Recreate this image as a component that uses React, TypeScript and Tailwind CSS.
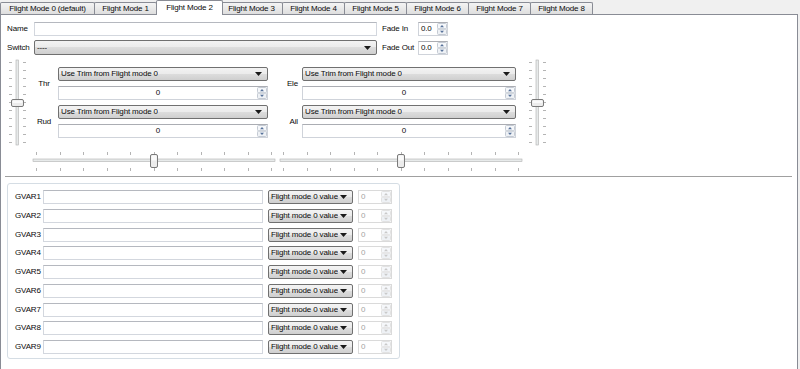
import React from "react";

const tabs = [
  "Flight Mode 0 (default)",
  "Flight Mode 1",
  "Flight Mode 2",
  "Flight Mode 3",
  "Flight Mode 4",
  "Flight Mode 5",
  "Flight Mode 6",
  "Flight Mode 7",
  "Flight Mode 8",
];

const comboBg =
  "bg-[linear-gradient(#f3f3f3,#ebebeb_50%,#dddddd_50%,#cfcfcf)]";

function Arrow() {
  return (
    <svg width="7" height="4" viewBox="0 0 7 4" className="shrink-0">
      <path d="M0 0h7L3.5 4z" fill="#1a1a1a" />
    </svg>
  );
}

function Combo({ text, className = "" }: { text: string; className?: string }) {
  return (
    <div
      className={`flex items-center justify-between h-[14px] rounded-[2px] border border-[#707070] ${comboBg} pl-[2px] pr-[5px] ${className}`}
    >
      <span className="truncate leading-none">{text}</span>
      <Arrow />
    </div>
  );
}

function SpinButtons({ disabled }: { disabled?: boolean }) {
  const stroke = disabled ? "#e2e2e2" : "#c4cad3";
  const arrow = disabled ? "#c9c9c9" : "#56719a";
  return (
    <svg width="10" height="12" viewBox="0 0 10 12" className="shrink-0">
      <rect x="0.5" y="0.5" width="9" height="5.3" rx="1" fill="#f5f7fa" stroke={stroke} />
      <rect x="0.5" y="6.2" width="9" height="5.3" rx="1" fill="#eef1f5" stroke={stroke} />
      <path d="M3 4.3h4L5 2.1z" fill={arrow} />
      <path d="M3 7.7h4L5 9.9z" fill={arrow} />
    </svg>
  );
}

function Spin({
  value,
  center,
  disabled,
  className = "",
}: {
  value: string;
  center?: boolean;
  disabled?: boolean;
  className?: string;
}) {
  return (
    <div
      className={`flex items-center h-[14px] bg-white border ${
        disabled
          ? "border-[#dadada] text-[#a3a3a3]"
          : "border-[#cfd3da] border-t-[#abadb3]"
      } ${className}`}
    >
      <div className={`flex-1 leading-none ${center ? "text-center" : "pl-[2px]"}`}>
        {value}
      </div>
      <SpinButtons disabled={disabled} />
    </div>
  );
}

function TextBox({ className = "" }: { className?: string }) {
  return (
    <div
      className={`h-[14px] bg-white border border-[#d3d7de] border-t-[#b5b8bf] ${className}`}
    />
  );
}

function VSlider() {
  const ticks = Array.from({ length: 11 }, (_, i) => 4 + i * 8);
  return (
    <svg width="24" height="90" viewBox="0 0 24 90" className="shrink-0">
      {ticks.map((y) => (
        <g key={y} stroke="#b4b4b4">
          <line x1="3" x2="6" y1={y + 0.5} y2={y + 0.5} />
          <line x1="17" x2="20" y1={y + 0.5} y2={y + 0.5} />
        </g>
      ))}
      <rect x="10" y="2" width="2.5" height="85" fill="#e7eaea" stroke="#b0b0b0" strokeWidth="0.6" />
      <rect x="5.5" y="41.5" width="12" height="7" rx="1.5" fill="#ececec" stroke="#7a7a7a" />
      <rect x="6.5" y="42.5" width="10" height="2.5" rx="1" fill="#fafafa" />
    </svg>
  );
}

function HSlider({ width }: { width: number }) {
  const first = 5;
  const last = width - 6;
  const ticks = Array.from({ length: 11 }, (_, i) => first + ((last - first) * i) / 10);
  const mid = (first + last) / 2;
  return (
    <svg width={width} height="22" viewBox={`0 0 ${width} 22`} className="shrink-0">
      {ticks.map((x) => (
        <g key={x} stroke="#b4b4b4">
          <line x1={Math.round(x) + 0.5} x2={Math.round(x) + 0.5} y1="2" y2="5" />
          <line x1={Math.round(x) + 0.5} x2={Math.round(x) + 0.5} y1="18" y2="21" />
        </g>
      ))}
      <rect x="2" y="9" width={width - 4} height="2.5" fill="#e7eaea" stroke="#b0b0b0" strokeWidth="0.6" />
      <rect x={Math.round(mid) - 3.5} y="4.5" width="7" height="13" rx="1.5" fill="#ececec" stroke="#7a7a7a" />
      <rect x={Math.round(mid) - 2.5} y="5.5" width="5" height="5" rx="1" fill="#fafafa" />
    </svg>
  );
}

function TrimRow({
  leftLabel,
  rightLabel,
}: {
  leftLabel: string;
  rightLabel: string;
}) {
  return (
    <div className="flex h-[33px]">
      <div className="w-[28px] flex items-center justify-center">{leftLabel}</div>
      <div className="w-[210px] flex flex-col gap-[5px]">
        <Combo text="Use Trim from Flight mode 0" />
        <Spin value="0" center />
      </div>
      <div className="w-[34px] flex items-center justify-end pr-[4px]">{rightLabel}</div>
      <div className="w-[214px] flex flex-col gap-[5px]">
        <Combo text="Use Trim from Flight mode 0" />
        <Spin value="0" center />
      </div>
    </div>
  );
}

export default function App() {
  return (
    <div
      className="w-[800px] h-[369px] overflow-hidden bg-[#f0f0f0] text-[8px] tracking-[-0.15px] text-[#0a0a0a] leading-none"
      style={{ fontFamily: "'Liberation Sans', Arial, sans-serif" }}
    >
      <div className="flex items-end h-[14px]">
        {tabs.map((t, i) => {
          const selected = i === 2;
          return (
            <div
              key={t}
              className={`flex items-center justify-center border border-b-0 border-[#898c95] rounded-t-[2px] ${
                i === 0 ? "w-[95px]" : "w-[63px] -ml-[1px]"
              } ${
                selected
                  ? "relative z-10 h-[15px] -mb-[1px] -mx-[2px] w-[67px] bg-white"
                  : "h-[12px] bg-[linear-gradient(#f4f4f4,#e9e9e9_50%,#dedede)]"
              }`}
            >
              {t}
            </div>
          );
        })}
      </div>

      <div className="w-[798px] h-[360px] bg-white border border-[#898c95]">
        {/* name / fade in */}
        <div className="flex items-center mt-[7px] pl-[6px] h-[14px]">
          <div className="w-[27px]">Name</div>
          <TextBox className="w-[343px]" />
          <div className="w-[36px] ml-[5px]">Fade In</div>
          <Spin value="0.0" className="w-[30px]" />
        </div>
        {/* switch / fade out */}
        <div className="flex items-center mt-[4px] pl-[6px] h-[15px]">
          <div className="w-[27px]">Switch</div>
          <Combo text="----" className="w-[343px] h-[15px]" />
          <div className="w-[36px] ml-[5px]">Fade Out</div>
          <Spin value="0.0" className="w-[30px]" />
        </div>

        {/* trims */}
        <div className="flex mt-[3px] pl-[5px]">
          <VSlider />
          <div className="w-[496px] flex flex-col">
            <div className="flex flex-col gap-[5px] mt-[9px]">
              <TrimRow leftLabel="Thr" rightLabel="Ele" />
              <TrimRow leftLabel="Rud" rightLabel="Ail" />
            </div>
            <div className="flex mt-[12px] pl-[1px] gap-[1px]">
              <HSlider width={246} />
              <HSlider width={246} />
            </div>
          </div>
          <VSlider />
        </div>

        <div className="ml-[4px] mt-[4px] w-[787px] h-px bg-[#a0a0a0]" />

        {/* gvars */}
        <div className="ml-[6px] mt-[6px] w-[393px] h-[176px] rounded-[3px] border border-[#d5dde4] pt-[6px] pl-[7px] flex flex-col gap-[4.75px]">
          {Array.from({ length: 9 }, (_, i) => (
            <div key={i} className="flex items-center h-[14px]">
              <div className="w-[28px]">GVAR{i + 1}</div>
              <TextBox className="w-[220px]" />
              <Combo text="Flight mode 0 value" className="w-[85px] ml-[5px]" />
              <Spin value="0" disabled className="w-[34px] ml-[5px]" />
            </div>
          ))}
        </div>
      </div>
    </div>
  );
}
